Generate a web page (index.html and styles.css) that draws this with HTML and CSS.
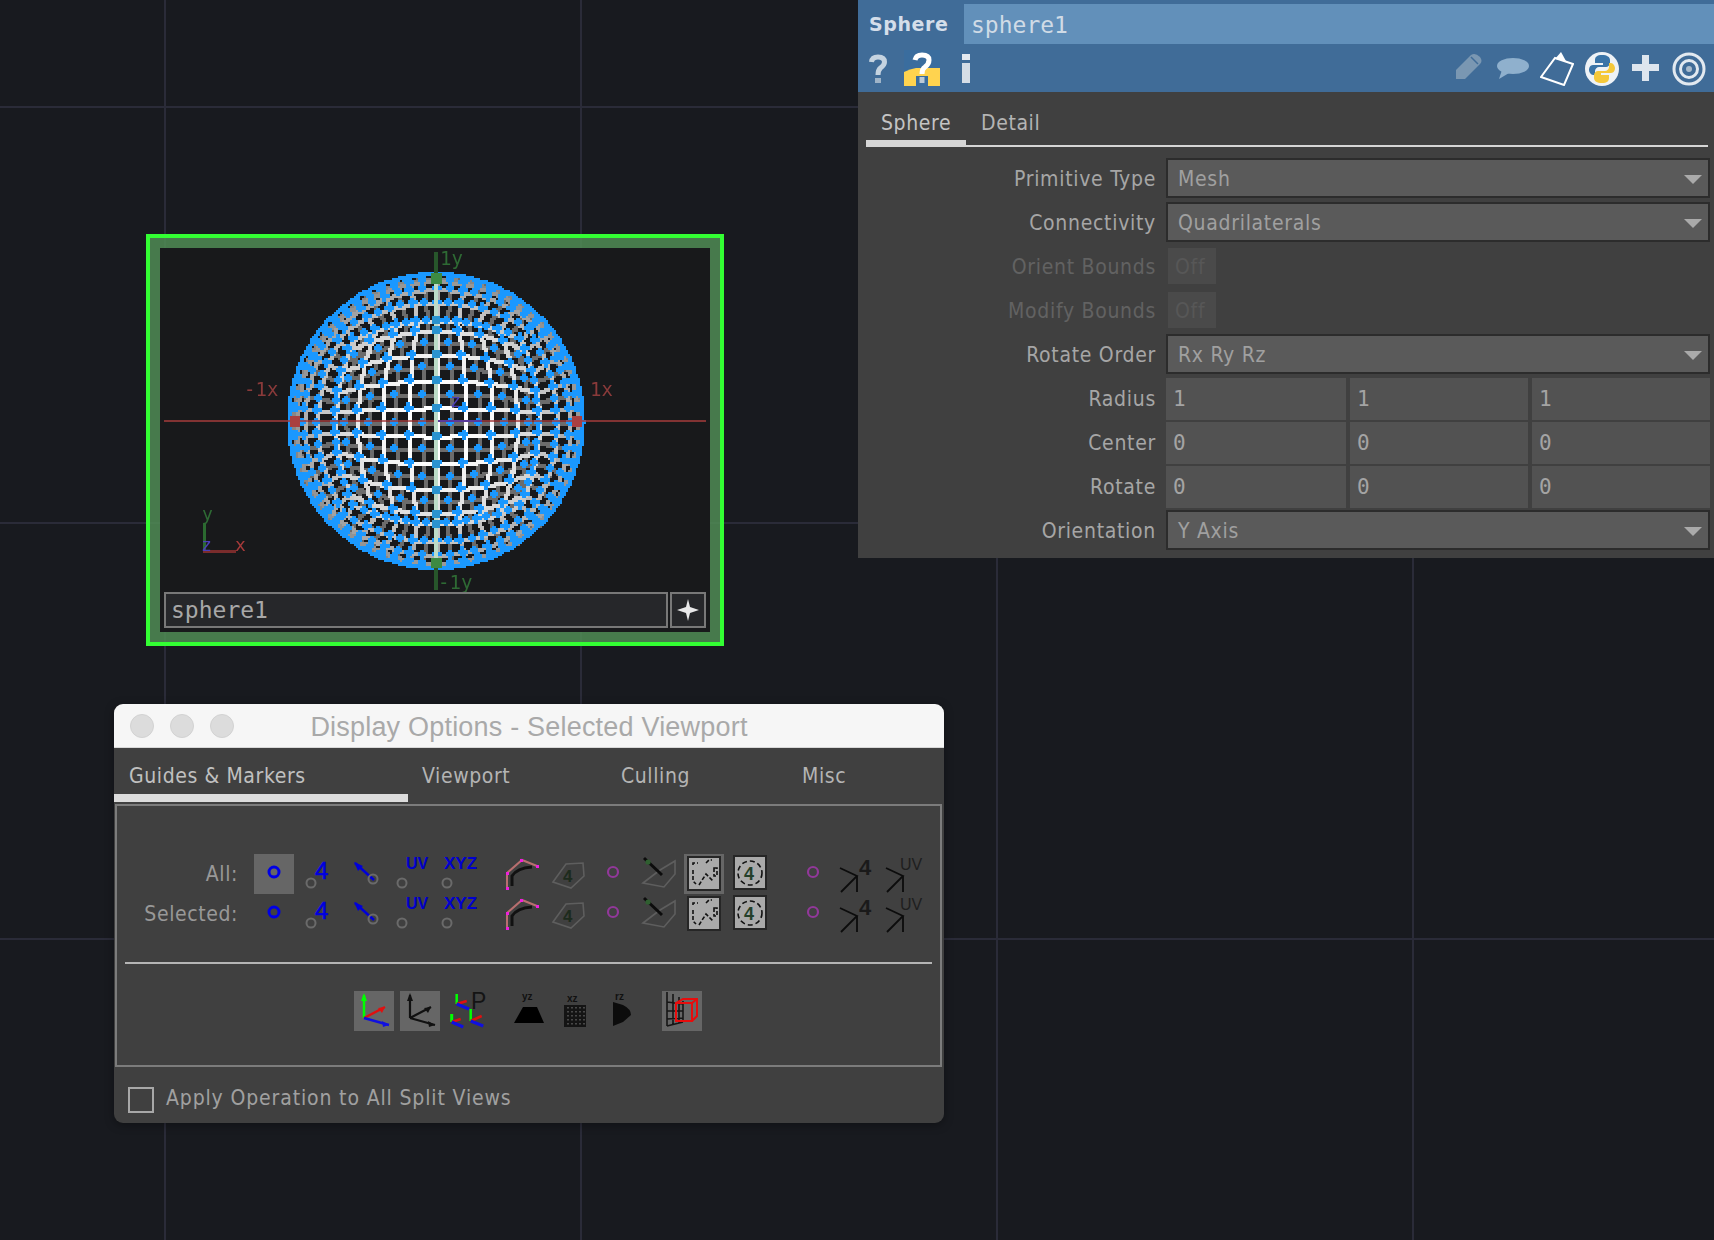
FILE: index.html
```html
<!DOCTYPE html>
<html lang="en">
  <head>
    <meta charset="UTF-8" />
    <title>Display Options - Selected Viewport</title>
    <link rel="stylesheet" href="styles.css">
  </head>
  <body>
    <svg class="defs" width="0" height="0">
      <defs>
        <g id="dot-gray"><circle cx="0" cy="0" r="4.5" fill="none" stroke="#6a6a6a" stroke-width="2" /></g>
        <g id="curve">
          <path d="M7 29V14L22 1 37 7" fill="none" stroke="#b86f6f" stroke-width="2" />
          <path d="M12 27V17Q17 9 32 8" fill="none" stroke="#111" stroke-width="3" />
          <path d="M6 28h3v3H6zM6 13h3v3H6zM20 0h3v3h-3zM36 6h3v3h-3z" fill="#f01ee0" />
        </g>
        <g id="blob4">
          <path d="M2 24 15 6 32 5 33 18 20 30Z" fill="none" stroke="#5e5e5e" stroke-width="1.6" />
          <text x="12" y="24" class="ic-txt-b" fill="#1d2b1d" font-size="17">4</text>
        </g>
        <g id="arrowblob">
          <path d="M3 27 20 14 35 5 35 18 24 31Z" fill="none" stroke="#5e5e5e" stroke-width="1.6" />
          <path d="M4 2 22 19" stroke="#0c0c0c" stroke-width="3" />
          <circle cx="8" cy="6" r="2.6" fill="#2f5f30" />
        </g>
        <g id="dashcurve">
          <rect x="1" y="1" width="32" height="33" fill="#aaa" stroke="#262626" stroke-width="2" />
          <path d="M6 9V7h5M19 7l3-3h3M27 12h3v8h-3z M6 14v11l3 3M12 29l7-11 7 7" fill="none" stroke="#111" stroke-width="1.6" stroke-dasharray="4 2" />
        </g>
        <g id="dash4">
          <rect x="1" y="1" width="32" height="33" fill="#aaa" stroke="#262626" stroke-width="2" />
          <circle cx="17" cy="18" r="12" fill="none" stroke="#111" stroke-width="1.6" stroke-dasharray="5 3" />
          <text x="11" y="25" class="ic-txt-b" fill="#24402a" font-size="18">4</text>
        </g>
        <g id="spike"><path d="M0 4 17 12 1 28M17 12V28" fill="none" stroke="#0c0c0c" stroke-width="1.8" /></g>
      </defs>
    </svg>

    <section class="params">
      <div class="params-head">
        <div class="name-row">
          <span class="op-type">Sphere</span>
          <span class="op-name">sphere1</span>
        </div>
        <div class="tool-row">
          <div class="tool-left">
            <svg width="18" height="36" viewBox="0 0 18 36"><path d="M2.500 12Q3 7 9 7 15.500 7 15.500 12 15.500 15 11.500 18 9 20 9 25" fill="none" stroke="#c5d3e0" stroke-width="5" /><rect x="6" y="28" width="6" height="5" fill="#9fb4c8" /></svg>
            <svg class="help-py" width="36" height="36" viewBox="0 0 36 36"><rect width="36" height="36" fill="#3a6d9e" /><path d="M0 22Q6 19 12 18H36V36H0Z" fill="#ffd34f" /><path d="M11 10Q12 5 18 5 25 5 25 10 25 14 21 17 18 19 18 24" fill="none" stroke="#fff" stroke-width="5" /><rect x="12" y="26" width="12" height="10" fill="#3a6d9e" /><rect x="15.500" y="27" width="5" height="6" fill="#bcc9d6" /></svg>
            <svg width="8" height="36" viewBox="0 0 8 36"><rect y="4" width="8" height="6" fill="#e4e9ef" /><rect y="13" width="8" height="20" fill="#d5dde6" /></svg>
          </div>
          <div class="tool-right">
            <svg width="27" height="36" viewBox="0 0 27 36"><path d="M0 29V20L15 5Q19 2 24 7 27 11 24 14L9 29Z" fill="#7a97b2" /><path d="M15 7 22 14" stroke="#406c98" stroke-width="1.500" /></svg>
            <svg width="33" height="36" viewBox="0 0 33 36"><ellipse cx="17" cy="16" rx="16" ry="8" fill="#8fb0cd" /><path d="M3 29 6 20 13 23Z" fill="#8fb0cd" /></svg>
            <svg width="34" height="36" viewBox="0 0 34 36"><path d="M1 27 15 8 33 14 24 35Z" fill="none" stroke="#fff" stroke-width="2" /><path d="M15 9 21 2 26 11Z" fill="#fff" /></svg>
            <svg width="36" height="36" viewBox="0 0 36 36"><circle cx="18" cy="19" r="17" fill="#eef2f6" /><g transform="translate(1 1)"><path d="M17 4C12 4 10 6 10 9V12H18V14H8C5 14 4 17 4 19S6 24 8 24H10V20C10 18 12 16 14 16H21C23 16 25 14 25 12V9C25 6 22 4 17 4Z" fill="#3a74a8" /><path d="M17 4C12 4 10 6 10 9V12H18V14H8C5 14 4 17 4 19S6 24 8 24H10V20C10 18 12 16 14 16H21C23 16 25 14 25 12V9C25 6 22 4 17 4Z" fill="#f5c83a" transform="rotate(180 17 18)" /></g></svg>
            <svg width="27" height="36" viewBox="0 0 27 36"><path d="M10 5h7v9h10v7H17v10h-7V21H0v-7h10z" fill="#dde5ee" /></svg>
            <svg width="34" height="36" viewBox="0 0 34 36"><g fill="none" stroke="#e2e9f0" stroke-width="3"><circle cx="17" cy="19" r="15" /><circle cx="17" cy="19" r="8.500" /></g><circle cx="17" cy="19" r="3" fill="#aabccd" /></svg>
          </div>
        </div>
      </div>

      <div class="param-tabs">
        <span class="param-tab is-active">Sphere</span>
        <span class="param-tab">Detail</span>
      </div>

      <div class="param-list">
        <div class="param"><label>Primitive Type</label><div class="menu">Mesh</div></div>
        <div class="param"><label>Connectivity</label><div class="menu">Quadrilaterals</div></div>
        <div class="param is-off"><label>Orient Bounds</label><div class="toggle">Off</div></div>
        <div class="param is-off"><label>Modify Bounds</label><div class="toggle">Off</div></div>
        <div class="param"><label>Rotate Order</label><div class="menu">Rx Ry Rz</div></div>
        <div class="param"><label>Radius</label><div class="nums"><span>1</span><span>1</span><span>1</span></div></div>
        <div class="param"><label>Center</label><div class="nums"><span>0</span><span>0</span><span>0</span></div></div>
        <div class="param"><label>Rotate</label><div class="nums"><span>0</span><span>0</span><span>0</span></div></div>
        <div class="param"><label>Orientation</label><div class="menu">Y Axis</div></div>
      </div>
    </section>

    <section class="node">
      <div class="viewer">
        <canvas id="sphere" width="550" height="384"></canvas>
        <span class="ax red ax-mx">-1x</span>
        <span class="ax red ax-px">1x</span>
        <span class="ax green ax-py">1y</span>
        <span class="ax green ax-my">-1y</span>
        <span class="ax-sm green ax-gy">y</span>
        <span class="ax-sm blue ax-gz">z</span>
        <span class="ax-sm red ax-gx">x</span>
        <span class="ax-sm blue ax-cz">z</span>
        <div class="node-bar">
          <div class="node-name">sphere1</div>
          <div class="node-plus"><svg width="22" height="22" viewBox="0 0 22 22"><path d="M11 0 13 8 22 11 13 14 11 22 9 14 0 11 9 8Z" fill="#e8e8e8" /></svg></div>
        </div>
      </div>
    </section>

    <section class="dialog">
      <header class="dialog-title">
        <div class="lights"><i></i><i></i><i></i></div>
        <h1>Display Options - Selected Viewport</h1>
      </header>

      <div class="dialog-tabs">
        <span class="dialog-tab is-active">Guides &amp; Markers</span>
        <span class="dialog-tab t-view">Viewport</span>
        <span class="dialog-tab t-cull">Culling</span>
        <span class="dialog-tab t-misc">Misc</span>
      </div>

      <div class="dialog-body">
        <div class="marker-grid">
          <span class="marker-label">All:</span>
          <button class="mk is-on"><svg viewBox="0 0 40 40"><circle cx="20" cy="18" r="5" fill="none" stroke="#0000e6" stroke-width="3" /></svg></button>
          <button class="mk"><svg viewBox="0 0 40 40"><use href="#dot-gray" x="13" y="29" /><text x="17" y="25" class="ic-txt" fill="#0000e0" stroke="#0000e0" stroke-width="0.6" font-size="24">4</text></svg></button>
          <button class="mk"><svg viewBox="0 0 40 40"><path d="M9 9 28 26" stroke="#0000d8" stroke-width="2.500" /><path d="M8 8 17 12 12 17Z" fill="#0000d8" /><use href="#dot-gray" x="27" y="25" /></svg></button>
          <button class="mk"><svg viewBox="0 0 40 40"><text x="12" y="15" class="ic-txt-b" fill="#0000c8" font-size="16">UV</text><use href="#dot-gray" x="8" y="29" /></svg></button>
          <button class="mk"><svg viewBox="0 0 40 40"><text x="6" y="15" class="ic-txt-b" fill="#0000d0" font-size="17">XYZ</text><use href="#dot-gray" x="9" y="29" /></svg></button>
          <button class="mk"><svg viewBox="0 0 40 40"><use href="#curve" y="5" /></svg></button>
          <button class="mk"><svg viewBox="0 0 40 40"><use href="#blob4" y="4" /></svg></button>
          <button class="mk"><svg viewBox="0 0 40 40"><circle cx="20" cy="18" r="5" fill="none" stroke="#92389a" stroke-width="2.200" /></svg></button>
          <button class="mk"><svg viewBox="0 0 40 40"><use href="#arrowblob" y="2" /></svg></button>
          <button class="mk is-on"><svg viewBox="0 0 40 40"><use href="#dashcurve" x="3" y="2" /></svg></button>
          <button class="mk"><svg viewBox="0 0 40 40"><use href="#dash4" x="3" y="1" /></svg></button>
          <button class="mk"><svg viewBox="0 0 40 40"><circle cx="20" cy="18" r="5" fill="none" stroke="#92389a" stroke-width="2.200" /></svg></button>
          <button class="mk"><svg viewBox="0 0 40 40"><use href="#spike" x="4" y="10" /><text x="23" y="21" class="ic-txt-b" fill="#1a1a1a" font-size="22">4</text></svg></button>
          <button class="mk"><svg viewBox="0 0 40 40"><use href="#spike" x="4" y="10" /><text x="18" y="16" class="ic-txt" fill="#1e1e1e" font-size="16">UV</text></svg></button>

          <span class="marker-label">Selected:</span>
          <button class="mk"><svg viewBox="0 0 40 40"><circle cx="20" cy="18" r="5" fill="none" stroke="#0000e6" stroke-width="3" /></svg></button>
          <button class="mk"><svg viewBox="0 0 40 40"><use href="#dot-gray" x="13" y="29" /><text x="17" y="25" class="ic-txt" fill="#0000e0" stroke="#0000e0" stroke-width="0.6" font-size="24">4</text></svg></button>
          <button class="mk"><svg viewBox="0 0 40 40"><path d="M9 9 28 26" stroke="#0000d8" stroke-width="2.500" /><path d="M8 8 17 12 12 17Z" fill="#0000d8" /><use href="#dot-gray" x="27" y="25" /></svg></button>
          <button class="mk"><svg viewBox="0 0 40 40"><text x="12" y="15" class="ic-txt-b" fill="#0000c8" font-size="16">UV</text><use href="#dot-gray" x="8" y="29" /></svg></button>
          <button class="mk"><svg viewBox="0 0 40 40"><text x="6" y="15" class="ic-txt-b" fill="#0000d0" font-size="17">XYZ</text><use href="#dot-gray" x="9" y="29" /></svg></button>
          <button class="mk"><svg viewBox="0 0 40 40"><use href="#curve" y="5" /></svg></button>
          <button class="mk"><svg viewBox="0 0 40 40"><use href="#blob4" y="4" /></svg></button>
          <button class="mk"><svg viewBox="0 0 40 40"><circle cx="20" cy="18" r="5" fill="none" stroke="#92389a" stroke-width="2.200" /></svg></button>
          <button class="mk"><svg viewBox="0 0 40 40"><use href="#arrowblob" y="2" /></svg></button>
          <button class="mk"><svg viewBox="0 0 40 40"><use href="#dashcurve" x="3" y="2" /></svg></button>
          <button class="mk"><svg viewBox="0 0 40 40"><use href="#dash4" x="3" y="1" /></svg></button>
          <button class="mk"><svg viewBox="0 0 40 40"><circle cx="20" cy="18" r="5" fill="none" stroke="#92389a" stroke-width="2.200" /></svg></button>
          <button class="mk"><svg viewBox="0 0 40 40"><use href="#spike" x="4" y="10" /><text x="23" y="21" class="ic-txt-b" fill="#1a1a1a" font-size="22">4</text></svg></button>
          <button class="mk"><svg viewBox="0 0 40 40"><use href="#spike" x="4" y="10" /><text x="18" y="16" class="ic-txt" fill="#1e1e1e" font-size="16">UV</text></svg></button>
        </div>

        <div class="dialog-rule"></div>

        <div class="axis-row">
          <button class="mk is-on"><svg viewBox="0 0 40 40"><path d="M10 27V4" stroke="#0f0" stroke-width="2.500" /><path d="M7 10 10 2 13 10Z" fill="#0f0" /><path d="M10 27 31 16" stroke="#e01010" stroke-width="2.500" /><path d="M24 17 31 16 28 22Z" fill="#e01010" /><path d="M10 27 35 34" stroke="#1010e0" stroke-width="2.500" /><path d="M28 30 35 34 29 36Z" fill="#1010e0" /></svg></button>
          <button class="mk is-on"><svg viewBox="0 0 40 40"><path d="M10 27V4M10 27 31 16M10 27 35 34" stroke="#111" stroke-width="2.200" /><path d="M7 10 10 2 13 10ZM24 17 31 16 28 22ZM28 30 35 34 29 36Z" fill="#111" /></svg></button>
          <button class="mk"><svg viewBox="0 0 40 40"><path d="M5.700 3V13" stroke="#0f0" stroke-width="2.500" /><path d="M5.700 13 15.700 10" stroke="#e01010" stroke-width="2.500" /><path d="M5.700 13 18 18" stroke="#1010e0" stroke-width="3" /><path d="M.7 23V31" stroke="#0f0" stroke-width="3" /><path d="M.7 31 9.700 28" stroke="#e01010" stroke-width="2.500" /><path d="M.7 31 12.300 36" stroke="#1010e0" stroke-width="3" /><path d="M19.700 18V30" stroke="#0f0" stroke-width="2.500" /><path d="M19.700 30 30.700 25" stroke="#e01010" stroke-width="2.500" /><path d="M19.700 30 32.300 35" stroke="#1010e0" stroke-width="3" /><text x="20" y="18" class="ic-txt" fill="#141414" font-size="23">P</text></svg></button>
          <button class="mk"><svg viewBox="0 0 40 40"><text x="12" y="9" class="ic-txt-b" fill="#111" font-size="10">yz</text><path d="M4 32 13 16H27L34 32Z" fill="#000" /></svg></button>
          <button class="mk"><svg viewBox="0 0 40 40"><text x="12" y="11" class="ic-txt-b" fill="#111" font-size="10">xz</text><rect x="9" y="14" width="22" height="22" fill="#141414" /><path d="M13 16V35M17 16V35M21 16V35M25 16V35M29 16V35" stroke="#5a5a5a" stroke-width="1.500" stroke-dasharray="1.500 2.500" /></svg></button>
          <button class="mk"><svg viewBox="0 0 40 40"><text x="11" y="9" class="ic-txt-b" fill="#111" font-size="10">rz</text><path d="M9 11 19 14Q27 18 27 24L19 31 9 35Z" fill="#0c0c0c" /></svg></button>
          <button class="mk is-on"><svg viewBox="0 0 40 40"><path d="M5 1V35M11 3V34M17 6V32M21 10V30M5 11 21 13M5 20H21M5 28 21 27M5 35 21 31" fill="none" stroke="#161616" stroke-width="1.600" /><path d="M14 12H30V30H14ZM14 12 21 8H35V25L30 30M30 12 35 8" fill="none" stroke="#e80c0c" stroke-width="2" /></svg></button>
        </div>
      </div>

      <div class="dialog-foot">
        <span class="check"></span>
        <span class="check-label">Apply Operation to All Split Views</span>
      </div>
    </section>

    <script src="sphere.js"></script>
  </body>
</html>
```

FILE: styles.css
```css
html,
body {
  margin: 0;
  padding: 0;
  height: 100%;
  overflow: hidden;
}
body {
  position: relative;
  width: 1714px;
  height: 1240px;
  font-family: "DejaVu Sans", sans-serif;
  font-stretch: condensed;
  background-color: #181a1f;
  background-image:
    linear-gradient(90deg, #2a2b38 2px, transparent 2px),
    linear-gradient(180deg, #2a2b38 2px, transparent 2px);
  background-size: 416px 416px;
  background-position: 164px 0, 0 106px;
}
.defs {
  position: absolute;
}

/* parameter window */
.params {
  position: absolute;
  left: 858px;
  top: 0;
  width: 856px;
  height: 558px;
  background: #404040;
  color: #a6a6a6;
}
.params-head {
  height: 92px;
  background: #406c98;
}
.name-row {
  display: flex;
  align-items: center;
  height: 40px;
  padding-top: 4px;
}
.op-type {
  width: 106px;
  padding-left: 11px;
  box-sizing: border-box;
  font-size: 19px;
  font-stretch: normal;
  letter-spacing: 0.6px;
  font-weight: bold;
  color: #d4deea;
}
.op-name {
  flex: 1;
  height: 40px;
  line-height: 42px;
  padding-left: 7px;
  background: #6290ba;
  font-family: "DejaVu Sans Mono", monospace;
  font-stretch: normal;
  font-size: 23px;
  color: #d0dbe6;
}
.tool-row {
  display: flex;
  justify-content: space-between;
  align-items: flex-start;
  height: 42px;
  padding: 6px 8px 0 11px;
}
.tool-left {
  display: grid;
  grid-template-columns: 35px 58px 8px;
}
.tool-right {
  display: grid;
  grid-template-columns: 40px 44px 44px 48px 40px 34px;
}
.tool-row svg {
  display: block;
}
.param-tabs {
  display: flex;
  height: 55px;
  margin: 0 6px 0 8px;
  box-sizing: border-box;
  border-bottom: 2px solid #d6d6d6;
}
.param-tab {
  position: relative;
  padding: 19px 15px 0 15px;
  font-size: 21px;
  color: #b4b4b4;
  letter-spacing: 0.6px;
}
.param-tab.is-active {
  width: 100px;
  box-sizing: border-box;
  color: #c4c4c4;
}
.param-tab.is-active::after {
  content: "";
  position: absolute;
  left: 0;
  right: 0;
  bottom: -2px;
  height: 7px;
  background: #d6d6d6;
}
.param-list {
  display: flex;
  flex-direction: column;
  gap: 4px;
  padding: 11px 4px 0 0;
}
.param {
  display: flex;
  height: 40px;
  font-size: 21px;
  letter-spacing: 0.7px;
}
.param label {
  width: 308px;
  box-sizing: border-box;
  padding-right: 10px;
  line-height: 42px;
  text-align: right;
}
.param.is-off label {
  color: #626262;
}
.menu {
  position: relative;
  flex: 1;
  box-sizing: border-box;
  line-height: 38px;
  padding-left: 10px;
  border: 2px solid #2c2c2c;
  background: #5a5a5a;
  color: #a0a0a0;
}
.menu::after {
  content: "";
  position: absolute;
  right: 6px;
  top: 15px;
  border-left: 9px solid transparent;
  border-right: 9px solid transparent;
  border-top: 9px solid #aaa;
}
.toggle {
  width: 48px;
  height: 36px;
  margin: 2px 0 0 2px;
  line-height: 38px;
  padding-left: 7px;
  box-sizing: border-box;
  background: #4a4a4a;
  color: #575757;
}
.nums {
  flex: 1;
  display: grid;
  grid-template-columns: 180px 178px 178px;
  gap: 4px;
}
.nums span {
  padding-left: 7px;
  line-height: 42px;
  background: #525252;
  color: #a4a4a4;
  font-family: "DejaVu Sans Mono", monospace;
  font-stretch: normal;
  letter-spacing: 0;
}

/* sphere node */
.node {
  position: absolute;
  left: 146px;
  top: 234px;
  width: 578px;
  height: 412px;
  box-sizing: border-box;
  border: 4px solid #33ff33;
  background: rgba(80, 140, 85, 0.85);
  padding: 10px;
}
.viewer {
  position: relative;
  width: 550px;
  height: 384px;
  background: #18191b;
}
.viewer canvas {
  display: block;
  position: absolute;
  left: 0;
  top: 0;
}
.ax,
.ax-sm {
  position: absolute;
  font-family: "DejaVu Sans Mono", monospace;
  font-stretch: normal;
  line-height: 1;
}
.ax {
  font-size: 19px;
}
.ax-sm {
  font-size: 18px;
}
.red { color: #8a3a3a; }
.green { color: #2e6a34; }
.blue { color: #4b3fb8; }
.ax-mx { left: 84px; top: 132px; }
.ax-px { left: 430px; top: 132px; }
.ax-py { left: 280px; top: 1px; }
.ax-my { left: 278px; top: 325px; }
.ax-gy { left: 42px; top: 257px; }
.ax-gz { left: 41px; top: 288px; }
.ax-gx { left: 75px; top: 288px; color: #a53a3a; }
.ax-cz { left: 290px; top: 144px; }
.node-bar {
  position: absolute;
  left: 4px;
  right: 4px;
  top: 344px;
  display: flex;
  gap: 2px;
  height: 36px;
}
.node-name {
  flex: 1;
  box-sizing: border-box;
  border: 2px solid #787878;
  background: #26272a;
  padding-left: 5px;
  line-height: 33px;
  font-family: "DejaVu Sans Mono", monospace;
  font-stretch: normal;
  font-size: 23px;
  color: #a8a8a8;
}
.node-plus {
  display: flex;
  align-items: center;
  justify-content: center;
  width: 36px;
  box-sizing: border-box;
  border: 2px solid #787878;
  background: #26272a;
}

/* display options dialog */
.dialog {
  position: absolute;
  left: 114px;
  top: 704px;
  width: 830px;
  height: 419px;
  border-radius: 9px;
  background: #404040;
  overflow: hidden;
  box-shadow: 0 2px 10px rgba(0, 0, 0, 0.35);
}
.dialog-title {
  position: relative;
  height: 44px;
  background: #f6f6f6;
  border-bottom: 1px solid #d8d8d8;
  box-sizing: border-box;
}
.lights {
  position: absolute;
  left: 16px;
  top: 10px;
  display: flex;
  gap: 16px;
}
.lights i {
  width: 22px;
  height: 22px;
  border-radius: 50%;
  border: 1px solid #d2d2d2;
  background: #dcdcdc;
}
.dialog-title h1 {
  margin: 0;
  text-align: center;
  font-family: "Liberation Sans", sans-serif;
  font-stretch: normal;
  font-weight: normal;
  font-size: 27px;
  letter-spacing: 0.2px;
  line-height: 46px;
  color: #a9a9a9;
}
.dialog-tabs {
  position: relative;
  display: flex;
  height: 56px;
  font-size: 21px;
  letter-spacing: 0.6px;
  color: #b4b4b4;
}
.dialog-tab {
  position: absolute;
  top: 16px;
}
.dialog-tab.is-active {
  left: 0;
  top: 0;
  width: 294px;
  height: 54px;
  box-sizing: border-box;
  padding: 16px 0 0 15px;
  border-bottom: 8px solid #dcdcdc;
  color: #c0c0c0;
}
.t-view { left: 308px; }
.t-cull { left: 507px; }
.t-misc { left: 688px; }
.dialog-body {
  height: 263px;
  margin: 0 2px 0 1px;
  box-sizing: border-box;
  border: 2px solid #7c7c7c;
}
.marker-grid {
  display: grid;
  grid-template-columns: 137px 44px 48px 48px 44px 62px 51px 42px 47px 44px 46px 63px 43px 46px 44px;
  grid-template-rows: 40px 40px;
  align-items: center;
  padding: 48px 0 0 0;
}
.marker-label {
  padding-right: 16px;
  text-align: right;
  font-size: 21px;
  letter-spacing: 0.6px;
  color: #989898;
}
.mk {
  display: block;
  width: 40px;
  height: 40px;
  padding: 0;
  border: 0;
  background: none;
}
.mk svg {
  display: block;
  width: 40px;
  height: 40px;
  overflow: visible;
}
.mk.is-on {
  background: #666;
}
.ic-txt {
  font-family: "Liberation Sans", sans-serif;
  font-stretch: normal;
}
.ic-txt-b {
  font-family: "Liberation Sans", sans-serif;
  font-stretch: normal;
  font-weight: bold;
}
.dialog-rule {
  height: 2px;
  margin: 28px 8px 0 8px;
  background: #b5b5b5;
}
.axis-row {
  display: grid;
  grid-template-columns: 46px 51px 59px 45px 49px 58px 40px;
  padding: 27px 0 0 237px;
}
.dialog-foot {
  display: flex;
  align-items: center;
  gap: 12px;
  padding: 19px 0 0 14px;
}
.check {
  width: 22px;
  height: 22px;
  border: 2px solid #a8a8a8;
}
.check-label {
  margin-bottom: 4px;
  font-size: 21px;
  letter-spacing: 0.86px;
  color: #a0a0a0;
}
```

FILE: sphere.js
```js
const canvas = document.getElementById("sphere");
const ctx = canvas.getContext("2d");

// sphere centre and radius, in canvas pixels
const cx = 276;
const cy = 173;
const R = 144;
const BLUE = "#1a98ff";

const deg = Math.PI / 180;
const whole = [-45, -33.75, -22.5, -11.25, 0, 11.25, 22.5, 33.75, 45];
const half = [-45, -39.375, -28.125, -16.875, -5.625, 5.625, 16.875, 28.125, 39.375, 45];
const side = [0.5, 11.25, 22.5, 33.75, 45];
const tan = (d) => Math.tan(d * deg);

// the render is chunky, so everything lands on a 2px grid
function block(x, y, w, h, color) {
  ctx.fillStyle = color;
  ctx.fillRect(Math.round(x / 2) * 2, Math.round(y / 2) * 2, w, h);
}

function point(x, y, z) {
  const len = Math.sqrt(x * x + y * y + z * z);
  return { x: cx + (R * x) / len, y: cy + (R * y) / len, z: z / len };
}

// the visible half of a cube sphere: a front face and the four side faces,
// each one a 2d array of points. A and B are the angles of columns and rows.
function hemisphere(A, B, swap) {
  const p = (x, y, z) => (swap ? point(y, x, z) : point(x, y, z));
  const faces = [];
  faces.push(A.map((a) => B.map((b) => p(tan(a), tan(b), 1))));
  for (const s of [-1, 1]) {
    faces.push(side.map((c) => B.map((b) => p(s, tan(b), tan(c)))));
    faces.push(side.map((c) => A.map((a) => p(tan(a), s, tan(c)))));
  }
  return faces;
}

function drawLine(p, q, width, color) {
  const n = Math.max(Math.abs(q.x - p.x), Math.abs(q.y - p.y)) / 2 + 1;
  for (let i = 0; i <= n; i++) {
    const t = i / n;
    block(p.x + (q.x - p.x) * t, p.y + (q.y - p.y) * t, width, width, color);
  }
}

function drawFace(face, colorFor) {
  const edge = (p, q) => drawLine(p, q, 4, colorFor(Math.min(p.z, q.z)));
  for (let i = 0; i < face.length; i++) {
    for (let j = 0; j < face[i].length; j++) {
      if (i + 1 < face.length) edge(face[i][j], face[i + 1][j]);
      if (j + 1 < face[i].length) edge(face[i][j], face[i][j + 1]);
    }
  }
}

function drawDots(face, size) {
  for (const col of face) {
    for (const p of col) {
      block(p.x - size / 2, p.y - 2, size, 4, BLUE);
      block(p.x - 2, p.y - size / 2, 4, size, BLUE);
    }
  }
}

function frontColor(z) {
  const v = Math.round(135 + 120 * Math.min(1, z * 1.05) ** 1.2);
  return `rgb(${v},${v},${v})`;
}

const front = hemisphere(whole, half, false);
const back = hemisphere(whole, half, true);

back.forEach((f) => drawFace(f, () => "#6c6c6c"));
front.forEach((f) => drawFace(f, frontColor));
back.forEach((f) => drawDots(f, 8));
front.forEach((f) => drawDots(f, 10));

// the outline reads as an almost solid blue band
for (let t = 0; t < 360; t += 1) {
  const x = cx + (R + 3) * Math.cos(t * deg);
  const y = cy + (R + 3) * Math.sin(t * deg);
  block(x - 2, y - 2, 4, 4, BLUE);
}

// world axes across the viewer
ctx.fillStyle = "rgba(165,60,60,0.75)";
ctx.fillRect(4, 172, 542, 2);
ctx.fillStyle = "#5a3a9a";
ctx.fillRect(278, 172, 44, 2);
ctx.fillStyle = "#bcdcc8";
ctx.fillRect(274, 36, 4, 274);
for (const p of front[0][4]) block(p.x - 4, p.y - 3, 8, 8, "#2a93cf");
ctx.fillStyle = "#27562b";
ctx.fillRect(274, 4, 4, 21);
ctx.fillRect(274, 320, 4, 22);
ctx.fillStyle = "#3d8a42";
ctx.fillRect(271, 25, 11, 11);
ctx.fillRect(271, 310, 11, 10);
ctx.fillStyle = "#a94040";
ctx.fillRect(130, 168, 10, 11);
ctx.fillRect(412, 168, 10, 11);

// little gizmo bottom left
ctx.fillStyle = "#2b6a30";
ctx.fillRect(43, 275, 3, 29);
ctx.fillStyle = "#7a2c2c";
ctx.fillRect(43, 302, 33, 3);
```
